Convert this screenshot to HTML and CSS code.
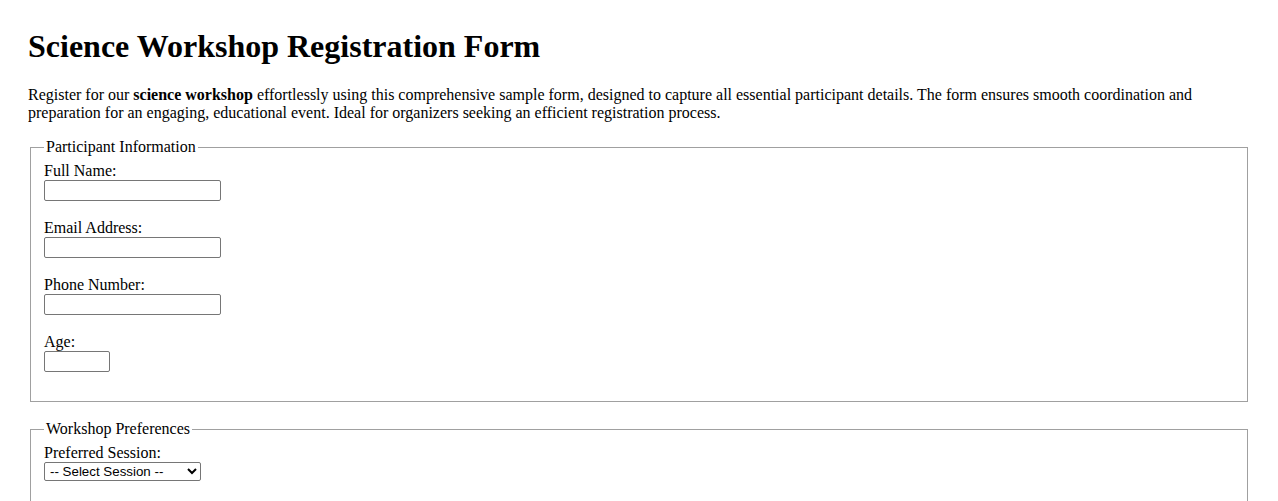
FILE: index.html
```html
<!DOCTYPE html>
<html lang="en">
<head>
<meta charset="utf-8">
<title>Science Workshop Registration Form</title>
<link rel="stylesheet" href="styles.css">
</head>
<body>
<h1 class="title">Science Workshop Registration Form</h1>
<p class="intro">Register for our <strong>science workshop</strong> effortlessly using this comprehensive sample form, designed to capture all essential participant details. The form ensures smooth coordination and preparation for an engaging, educational event. Ideal for organizers seeking an efficient registration process.</p>
<form class="form">
<fieldset class="group">
<legend class="legend">Participant Information</legend>
<label class="label" for="name">Full Name:</label><br>
<input class="text-input" type="text" id="name"><br><br>
<label class="label" for="email">Email Address:</label><br>
<input class="text-input" type="email" id="email"><br><br>
<label class="label" for="phone">Phone Number:</label><br>
<input class="text-input" type="tel" id="phone"><br><br>
<label class="label" for="age">Age:</label><br>
<input class="age-input" type="number" id="age"><br><br>
</fieldset>
<br>
<fieldset class="group">
<legend class="legend">Workshop Preferences</legend>
<label class="label" for="session">Preferred Session:</label><br>
<select class="select" id="session">
<option>-- Select Session --</option>
<option>Morning</option>
<option>Afternoon</option>
</select><br><br>
<label class="label" for="topic">Topic of Interest:</label><br>
<input class="text-input" type="text" id="topic"><br><br>
</fieldset>
</form>
</body>
</html>
```
FILE: styles.css
```css
html, body {
  background: #ffffff;
}
body {
  margin: 28px;
  font-family: "Liberation Serif", "Times New Roman", serif;
  font-size: 16px;
  color: #000000;
}
.title {
  font-size: 32px;
  font-weight: bold;
  margin: 0 0 21.44px;
}
.intro {
  margin: 16px 0;
}
.form {
  margin: 0;
}
.group {
  margin: 0 2px;
  padding: 5.6px 13px 11px;
  border: 1px solid #a0a0a0;
}
.legend {
  padding: 0 2px;
}
.text-input,
.age-input,
.select {
  font-family: "Liberation Sans", Arial, sans-serif;
  font-size: 13.333px;
  box-sizing: border-box;
  margin: 0;
  border: 1px solid #767676;
  border-radius: 2px;
  background: #ffffff;
}
.text-input {
  width: 177px;
  height: 21px;
  padding: 1px 2px;
}
.age-input {
  width: 66px;
  height: 21px;
  padding: 1px 2px;
}
.select {
  width: 157px;
  height: 19px;
  padding: 0 0 0 1px;
  color: #000000;
}
```
